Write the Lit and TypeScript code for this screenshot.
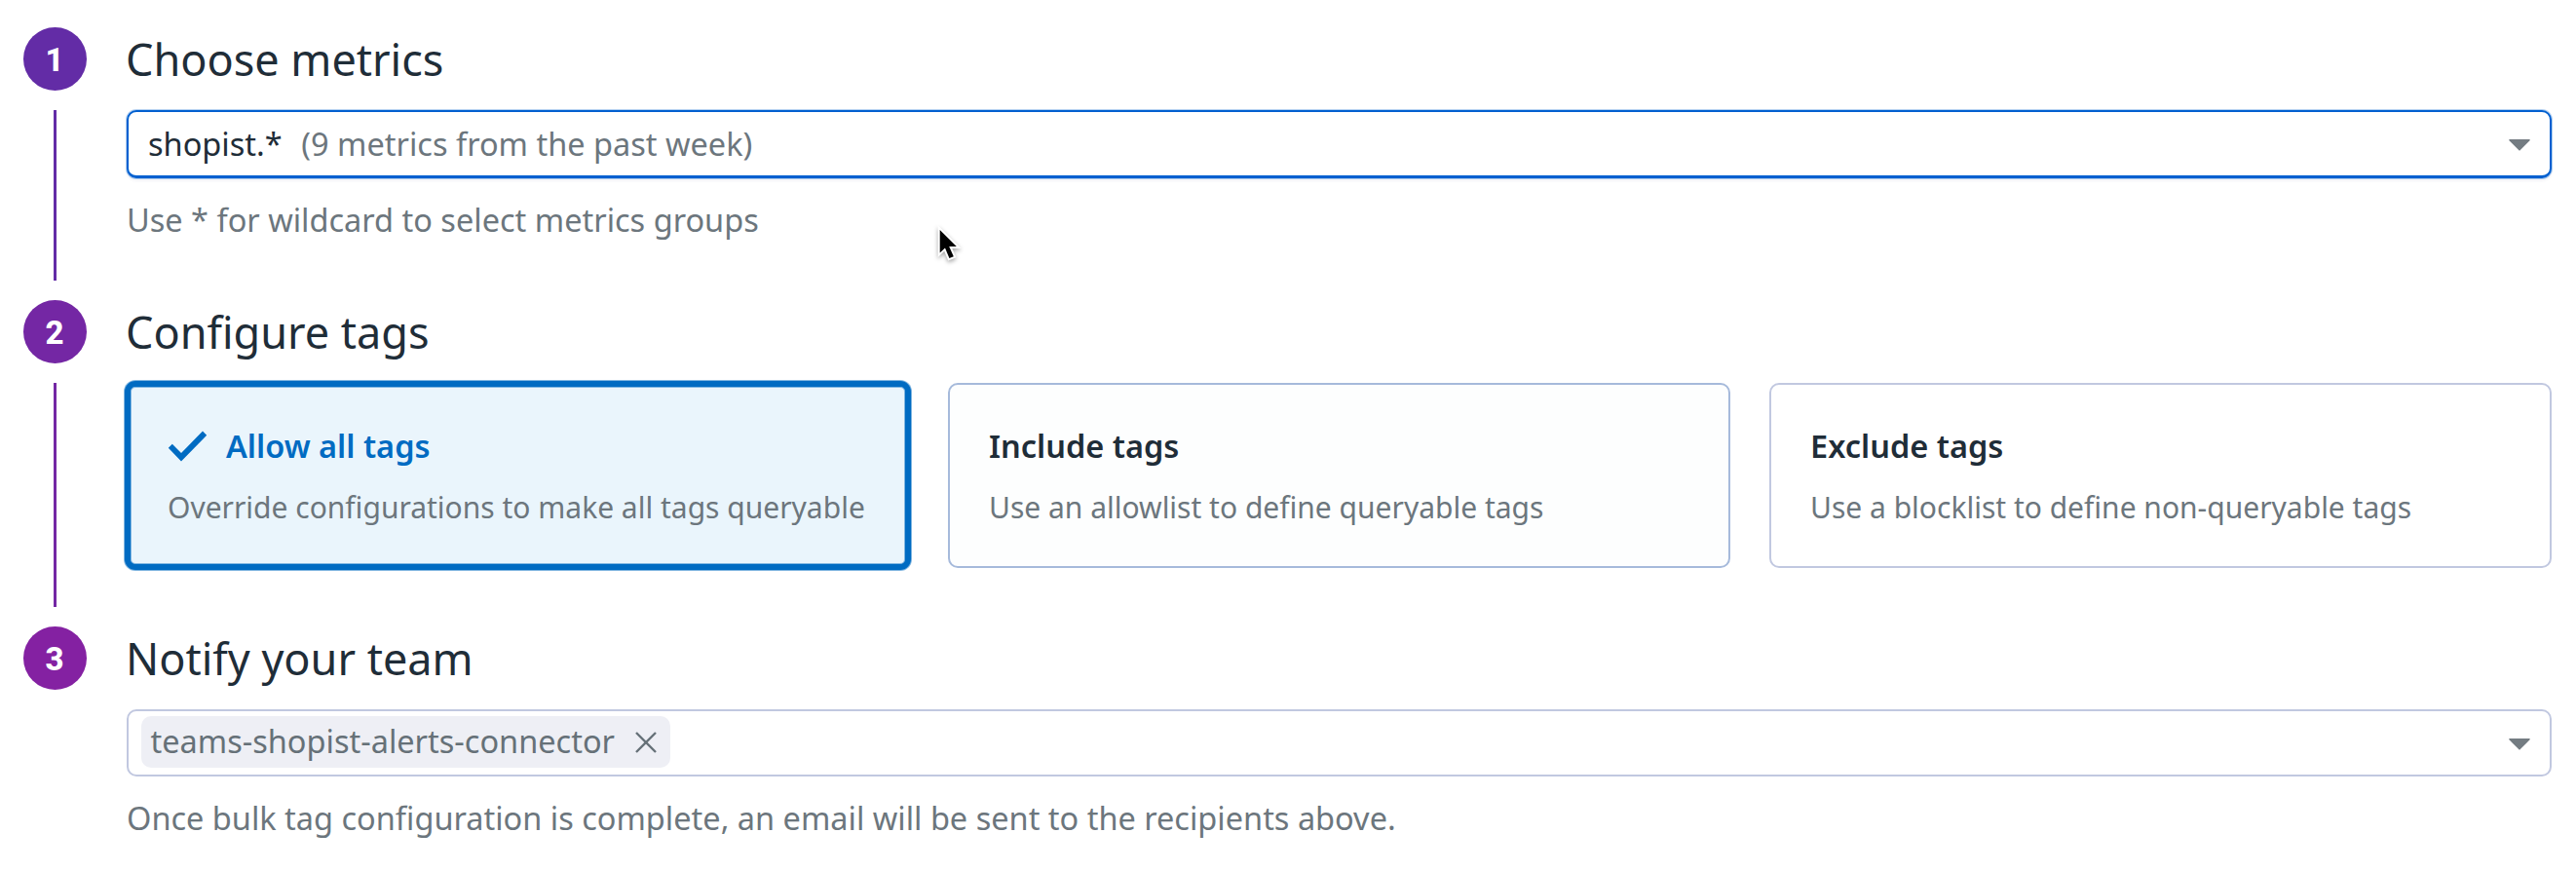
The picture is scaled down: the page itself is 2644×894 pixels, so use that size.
import { LitElement, html, css, svg } from 'lit';
import { customElement, property } from 'lit/decorators.js';
import { classMap } from 'lit/directives/class-map.js';

@customElement('wizard-step')
class WizardStep extends LitElement {
  @property({ type: Number }) number = 1;
  @property() heading = '';
  @property({ type: Boolean }) last = false;

  static styles = css`
    :host { display: grid; grid-template-columns: 65px minmax(0, 1fr); column-gap: 40px; }
    .rail { display: flex; flex-direction: column; align-items: center; }
    .badge {
      box-sizing: border-box; width: 65px; height: 65px; flex: none; border-radius: 50%;
      display: flex; align-items: center; justify-content: center;
      padding: 2px 1px 0 0;
      background: var(--step-color); color: #fff;
      font: 800 33px/63px Roboto, sans-serif;
    }
    .line { flex: 1; width: 3px; margin: 20px 0; background: var(--step-color); }
    .title {
      margin: 0; height: 65px; color: #1f2d38;
      font-weight: 400; font-size: 45px; line-height: 65px;
    }
    .content { padding-top: 20px; padding-left: 1px; }
  `;

  render() {
    return html`
      <div class="rail">
        <div class="badge">${this.number}</div>
        ${this.last ? null : html`<div class="line"></div>`}
      </div>
      <div>
        <h2 class="title">${this.heading}</h2>
        <div class="content"><slot></slot></div>
      </div>
    `;
  }
}

@customElement('select-field')
class SelectField extends LitElement {
  @property({ type: Boolean, reflect: true }) focused = false;

  static styles = css`
    :host {
      display: flex; align-items: center; justify-content: space-between;
      box-sizing: border-box; height: 69px; padding: 0 19px 0 13px;
      border: 2px solid #c1c8e0; border-radius: 10px; background: #fff;
    }
    :host([focused]) {
      height: 70px; padding-left: 20px; border-color: #0060d0; border-bottom-width: 3px;
      box-shadow: 0 0 0 1px rgba(0, 96, 208, 0.3), 0 3px 3px rgba(30, 40, 90, 0.05);
    }
    .value { display: flex; align-items: center; }
    .arrow { display: block; width: 24px; height: 14px; margin-top: 2px; }
  `;

  render() {
    return html`
      <div class="value"><slot></slot></div>
      <svg class="arrow" viewBox="0 0 24 14">
        <path d="M2 1.8 H22 L12 11.8 Z" fill="#747c82" stroke="#747c82" stroke-width="1.6" stroke-linejoin="round"/>
      </svg>
    `;
  }
}

interface TagOption { title: string; text: string; state: string }

const OPTIONS: TagOption[] = [
  { title: 'Allow all tags', text: 'Override configurations to make all tags queryable', state: 'selected' },
  { title: 'Include tags', text: 'Use an allowlist to define queryable tags', state: 'hover' },
  { title: 'Exclude tags', text: 'Use a blocklist to define non-queryable tags', state: '' },
];

const check = svg`<path d="M0.8 17.8 L4.8 13.8 L14 23 L36 0.6 L40.2 4.8 L14 31.4 Z" fill="#006bc2"/>`;

@customElement('app-root')
class AppRoot extends LitElement {
  static styles = css`
    :host {
      display: block; position: relative; box-sizing: border-box;
      height: 894px; padding: 28px 25px 0 24px; overflow: hidden;
      background: #fff; color: #1f2d38;
      font-family: "Noto Sans", sans-serif; font-size: 32.5px; line-height: 44px;
    }
    .first { --step-color: #632ca6; height: 280px; }
    .second { --step-color: #7427a4; height: 335px; }
    .third { --step-color: #8421a2; }
    .count { margin-left: 19.7px; color: #6c767d; }
    .helper { margin: 21px 0 0; color: #6c767d; }
    .cards { display: grid; grid-template-columns: repeat(3, 1fr); gap: 40px; }
    .card {
      box-sizing: border-box; height: 190px; padding: 41px 40px 0;
      border: 2px solid #c1c8e0; border-radius: 10px; white-space: nowrap;
    }
    .card.hover { border-color: #a6badb; background: #fdfefe; }
    .card.selected {
      margin: -2px; height: 194px; padding: 39px 38px 0;
      border: 6px solid #006bc2; border-radius: 11px; background: #eaf5fc;
      box-shadow: 0 0 0 1px rgba(0, 107, 194, 0.5), inset 0 0 0 1px rgba(0, 107, 194, 0.45);
    }
    .name { display: flex; align-items: center; font-weight: 600; }
    .selected .name { color: #006bc2; }
    .check { width: 41px; height: 32px; margin-right: 19px; }
    .text { margin-top: 21px; font-size: 30px; line-height: 40px; color: #6c767d; }
    .chip {
      display: flex; align-items: center; box-sizing: border-box; height: 53px;
      margin-bottom: 2px; padding: 0 13px 0 9.5px; border-radius: 10px;
      background: #eeeff5; color: #667178;
    }
    .label { padding-bottom: 1px; }
    .remove { width: 24px; height: 24px; margin-left: 20.5px; }
    .cursor {
      position: absolute; left: 958px; top: 228px; width: 32px; height: 44px;
      filter: drop-shadow(0 2px 2px rgba(0, 0, 0, 0.35));
    }
  `;

  render() {
    return html`
      <wizard-step class="first" number="1" heading="Choose metrics">
        <select-field focused>
          <span>shopist.*</span><span class="count">(9 metrics from the past week)</span>
        </select-field>
        <p class="helper">Use * for wildcard to select metrics groups</p>
      </wizard-step>

      <wizard-step class="second" number="2" heading="Configure tags">
        <div class="cards">
          ${OPTIONS.map((o) => html`
            <div class=${classMap({ card: true, selected: o.state === 'selected', hover: o.state === 'hover' })}>
              <div class="name">
                ${o.state === 'selected' ? html`<svg class="check" viewBox="0 0 41 32">${check}</svg>` : null}
                <span>${o.title}</span>
              </div>
              <div class="text">${o.text}</div>
            </div>`)}
        </div>
      </wizard-step>

      <wizard-step class="third" number="3" heading="Notify your team" last>
        <select-field>
          <span class="chip">
            <span class="label">teams-shopist-alerts-connector</span>
            <svg class="remove" viewBox="0 0 24 24">
              <path d="M2 2 L22 22 M22 2 L2 22" stroke="#667178" stroke-width="2.4" fill="none"/>
            </svg>
          </span>
        </select-field>
        <p class="helper">Once bulk tag configuration is complete, an email will be sent to the recipients above.</p>
      </wizard-step>

      <svg class="cursor" viewBox="0 0 32 44">
        <path d="M6.7 8 V31.4 L12 26.4 L16.4 37 L20.8 35.2 L16.2 25 H23.8 Z" fill="#000" stroke="#fff" stroke-width="4" paint-order="stroke"/>
      </svg>
    `;
  }
}
